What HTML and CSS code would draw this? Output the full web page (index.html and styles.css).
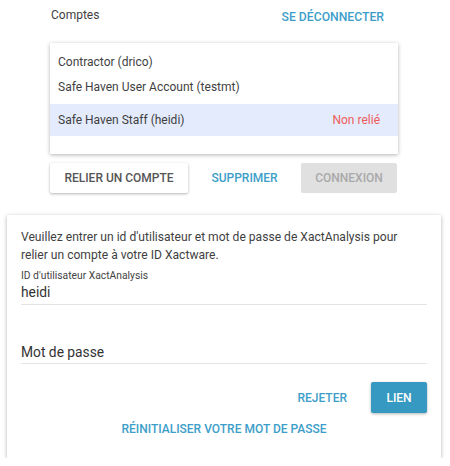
FILE: index.html
```html
<!DOCTYPE html>
<html>
<head>
<meta charset="utf-8">
<link rel="stylesheet" href="styles.css">
</head>
<body>
<div class="accounts">
  <div class="header">
    <span class="title">Comptes</span>
    <span class="link logout">SE DÉCONNECTER</span>
  </div>
  <div class="list">
    <div class="item">Contractor (drico)</div>
    <div class="item">Safe Haven User Account (testmt)</div>
    <div class="item selected"><span>Safe Haven Staff (heidi)</span><span class="status">Non relié</span></div>
  </div>
  <div class="actions">
    <button class="btn raised">RELIER UN COMPTE</button>
    <button class="btn flat">SUPPRIMER</button>
    <button class="btn disabled">CONNEXION</button>
  </div>
</div>
<div class="card">
  <p class="intro">Veuillez entrer un id d'utilisateur et mot de passe de XactAnalysis pour relier un compte à votre ID Xactware.</p>
  <div class="field">
    <div class="label">ID d'utilisateur XactAnalysis</div>
    <div class="value">heidi</div>
  </div>
  <div class="field pw">
    <div class="value">Mot de passe</div>
  </div>
  <div class="card-actions">
    <button class="btn flat">REJETER</button>
    <button class="btn primary">LIEN</button>
  </div>
  <div class="reset"><span class="link">RÉINITIALISER VOTRE MOT DE PASSE</span></div>
</div>
</body>
</html>
```
FILE: styles.css
```css
* { box-sizing: border-box; }
body {
  margin: 0;
  background: #fff;
  font-family: Roboto, "Liberation Sans", sans-serif;
  color: #3f3f3f;
}
.accounts {
  width: 348px;
  margin-left: 50px;
  padding-top: 7px;
}
.header {
  display: flex;
  justify-content: space-between;
  align-items: flex-start;
  height: 36px;
  padding-left: 1px;
  padding-right: 14px;
}
.title { font-size: 12px; line-height: 16px; }
.link {
  color: #3d9ec9;
  font-weight: 500;
  font-size: 12px;
}
.logout { line-height: 20px; font-size: 12.2px; }
.list {
  background: #fff;
  box-shadow: 0 1px 4px rgba(0,0,0,0.3);
  padding: 6px 0 18px;
}
.item {
  height: 25px;
  display: flex;
  align-items: center;
  justify-content: space-between;
  padding: 0 18px 0 8px;
  font-size: 12px;
}
.item.selected {
  height: 32px;
  margin-top: 5px;
  background: #e3ebfc;
}
.status { color: #ef5b5b; }
.actions {
  display: flex;
  justify-content: space-between;
  margin-top: 9px;
  padding-right: 1px;
}
.btn {
  font-family: Roboto, "Liberation Sans", sans-serif;
  font-weight: 500;
  font-size: 12px;
  height: 30px;
  border: none;
  border-radius: 2px;
  background: transparent;
  padding: 0 14px;
  cursor: pointer;
}
.btn.raised {
  width: 138px;
  background: #fff;
  color: #555;
  box-shadow: 0 1px 3px rgba(0,0,0,0.3);
}
.btn.flat { color: #3d9ec9; padding: 0 16px; }
.btn.disabled {
  width: 96px;
  background: #e0e0e0;
  color: #a9a9a9;
}
.card {
  margin: 22px 9px 0 7px;
  box-shadow: 0 1px 4px rgba(0,0,0,0.3);
  padding: 13px 14px 0;
  height: 243px;
}
.intro {
  margin: 0;
  font-size: 12.1px;
  line-height: 18px;
}
.field {
  border-bottom: 1px solid #e2e2e2;
  margin-top: 5px;
}
.label { font-size: 10.3px; line-height: 13px; color: #444; }
.value { font-size: 13.8px; line-height: 18px; padding: 1px 0 3px; color: #333; }
.field.pw { margin-top: 38px; }
.field.pw .value { padding: 0 0 2px; }
.card-actions {
  display: flex;
  justify-content: flex-end;
  align-items: center;
  gap: 8px;
  margin-top: 18px;
}
.btn.primary {
  width: 56px;
  height: 31px;
  background: #3599c1;
  color: #fff;
  box-shadow: 0 1px 3px rgba(0,0,0,0.3);
}
.reset {
  text-align: center;
  margin-top: 7px;
  line-height: 16px;
}
```
